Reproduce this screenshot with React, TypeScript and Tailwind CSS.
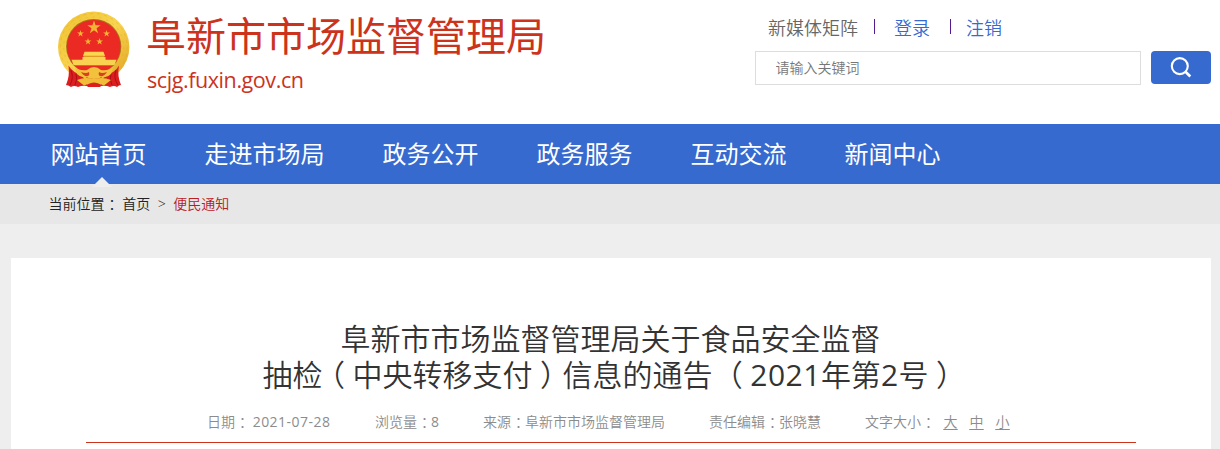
import React from 'react';

const navItems = ['网站首页', '走进市场局', '政务公开', '政务服务', '互动交流', '新闻中心'];

const STAR = 'M0,-1 L.225,-.309 L.951,-.309 L.363,.118 L.588,.809 L0,.382 L-.588,.809 L-.363,.118 L-.951,-.309 L-.225,-.309 Z';

const stars = [
  { x: 44, y: 22.5, s: 7 },
  { x: 30.5, y: 28.5, s: 3.6 },
  { x: 56.6, y: 28.5, s: 3.6 },
  { x: 38, y: 36.6, s: 3.6 },
  { x: 49.6, y: 36.6, s: 3.6 },
];

const Emblem: React.FC = () => (
  <svg width="90" height="90" viewBox="0 0 90 90" aria-hidden="true">
    <defs>
      <linearGradient id="gold" x1="0" y1="0" x2="1" y2="1">
        <stop offset="0" stopColor="#efc02f" />
        <stop offset="0.5" stopColor="#f8d450" />
        <stop offset="1" stopColor="#dfa21f" />
      </linearGradient>
    </defs>
    <ellipse cx="43.7" cy="42" rx="35.7" ry="35.5" fill="url(#gold)" />
    <circle cx="43.7" cy="42" r="33.5" fill="none" stroke="#e2a526" strokeWidth="1" strokeDasharray="3 4" opacity="0.4" />
    <circle cx="43.7" cy="42" r="30" fill="none" stroke="#e2a526" strokeWidth="1" strokeDasharray="2 5" opacity="0.4" />
    <circle cx="43.7" cy="41.5" r="27.6" fill="#a8741c" />
    <circle cx="43.7" cy="41.8" r="26.8" fill="#ec2a24" />
    {stars.map((star) => (
      <path key={star.x} d={STAR} fill="#f2b632" transform={`translate(${star.x} ${star.y}) scale(${star.s})`} />
    ))}
    {/* Tiananmen gate */}
    <path d="M34.5 46.7H53.5L55 51H33Z" fill="#fbd64e" />
    <path d="M33.5 50.7H54.5V52.2H33.5Z" fill="#e29a24" />
    <path d="M32.5 52H55.5V55H32.5Z" fill="#f8d250" />
    <path d="M21.5 54.7H66.5L64.5 60H23.5Z" fill="#f8d250" />
    <path d="M23.5 60H64.5L63 61H25Z" fill="#c9791b" />
    {/* ribbons */}
    <path d="M18.5 60.5Q23 68 32 70L38 81Q32 80 28 82Q24 80 21 82Q18 80 16 80Q20 71 18.5 60.5Z" fill="#dc1e1f" />
    <path d="M69 60.5Q65 68 55 70L50 81Q56 80 60 82Q64 80 67 82Q69 80 71 80Q67 71 69 60.5Z" fill="#dc1e1f" />
    <path d="M21 65Q24 73 20 80M26 69Q28 74 25 80M66 65Q63 73 68 80M61 69Q59 74 62 80" stroke="#a90f18" strokeWidth="1" fill="none" />
    <path d="M25 63Q31 66 37 65Q44 59 51 65Q57 66 63 63L61 69Q57 73 53 72Q49 76 44 75Q39 76 35 72Q31 73 27 69Z" fill="#f3c23d" />
    <path d="M31 67Q36 69 39 67Q40 70 38 71Q34 72 31 67Z" fill="#d8401e" />
    <path d="M57 67Q52 69 49 67Q48 70 50 71Q54 72 57 67Z" fill="#d8401e" />
    <path d="M36 72Q44 76 52 72L50 75H38Z" fill="#dc2a1e" />
    <path d="M27 75Q35 71.5 44 74Q53 71.5 61 75L54 80.5Q44 76 34 80.5Z" fill="#efbd38" />
    <path d="M36 80Q44 75 52 80L50 82H38Z" fill="#dc1e1f" />
  </svg>
);

const SearchIcon: React.FC = () => (
  <svg width="24" height="24" viewBox="0 0 24 24" fill="none" stroke="#fff" strokeWidth="2.1">
    <circle cx="10.8" cy="10.1" r="8" />
    <path d="M16.5 15.8L21.3 20.5" strokeWidth="2.7" />
  </svg>
);

const Header: React.FC = () => (
  <header className="flex h-[124px] justify-between bg-white pr-[9px] pl-[50px]">
    <div className="flex">
      <div className="h-[90px] w-[90px] pt-[5px]">
        <Emblem />
      </div>
      <div className="pt-[11px] pl-[6px] text-[#cb331d]">
        <h1 className="text-[40px] leading-[49px] whitespace-nowrap">阜新市市场监督管理局</h1>
        <p className="pl-px text-[21.5px] leading-[39px] tracking-[-0.42px]">scjg.fuxin.gov.cn</p>
      </div>
    </div>

    <div className="w-[456px] pt-[14px]">
      <div className="flex h-[28px] items-center pl-[13px] text-[18px] font-[350] whitespace-nowrap text-[#366acf]">
        <span className="w-[106px] text-[#666]">新媒体矩阵</span>
        <span className="mb-[3px] h-[15px] w-px bg-[#551a8b]" />
        <a className="ml-[19px] w-[56px]">登录</a>
        <span className="mb-[3px] h-[15px] w-px bg-[#551a8b]" />
        <a className="ml-[15px]">注销</a>
      </div>
      <div className="mt-[9px] flex justify-between">
        <input
          className="h-[34px] w-[386px] border border-[#ddd] pb-[2px] pl-[19.5px] text-[14px] font-[350] outline-none placeholder:text-[#777]"
          placeholder="请输入关键词"
        />
        <button className="flex h-[33px] w-[60px] items-center justify-center rounded-[4px] bg-[#366acf]">
          <SearchIcon />
        </button>
      </div>
    </div>
  </header>
);

const Nav: React.FC = () => (
  <nav className="flex h-[60px] gap-[58px] bg-[#366acf] pl-[50.5px] text-[24px] leading-[60px] text-white">
    {navItems.map((item, i) => (
      <a key={item} className="relative h-[60px] whitespace-nowrap">
        {item}
        {i === 0 && (
          <svg className="absolute bottom-[-3px] left-[41px]" width="20" height="10" viewBox="0 0 20 10">
            <path d="M10 0L20 10H0Z" fill="#eee" />
          </svg>
        )}
      </a>
    ))}
  </nav>
);

// full-width punctuation, centred in its cell
const Colon: React.FC = () => (
  <span className="inline-block w-[14px] pl-px text-center [font-feature-settings:'halt']">：</span>
);

const Paren: React.FC<{ children: string }> = ({ children }) => (
  <span className="inline-block w-[30px] text-center [font-feature-settings:'halt']">{children}</span>
);

const Article: React.FC = () => (
  <main className="mr-[9px] ml-[11px] h-[191px] bg-white px-[75px] pt-[63px] text-[#333]">
    <h2 className="pr-px text-center text-[30px] leading-[36px] font-[350] whitespace-pre">
      阜新市市场监督管理局关于食品安全监督
      <br />
      抽检<Paren>（</Paren>中央转移支付<Paren>）</Paren>信息的通告 <Paren>（</Paren>
      <span className="font-normal tracking-[0.5px]">2021</span>年第<span className="font-normal tracking-[0.5px]">2</span>号<Paren>）</Paren>
    </h2>
    <div className="flex h-[50px] border-b border-[#cb331d] pt-[18px] pl-[121px] text-[14px] leading-[22px] font-[350] whitespace-pre text-[#8c8c8c]">
      <span className="w-[168px]">日期<Colon /> <span className="font-normal tracking-[0.48px]">2021-07-28</span></span>
      <span className="w-[108px]">浏览量<Colon /><span className="font-normal">8</span></span>
      <span className="w-[226px]">来源<Colon />阜新市市场监督管理局</span>
      <span className="w-[156px]">责任编辑<Colon />张晓慧</span>
      <span className="w-[78.5px]">文字大小<Colon /></span>
      <span className="flex gap-[12px] underline underline-offset-2">
        <a>大</a>
        <a>中</a>
        <a>小</a>
      </span>
    </div>
  </main>
);

export default function App() {
  return (
    <div
      lang="zh-CN"
      className="h-[449px] w-[1220px] overflow-hidden bg-[#eee] font-['Open_Sans','Noto_Sans_CJK_SC',sans-serif]"
    >
      <Header />
      <Nav />
      <div className="mb-[34px] h-[40px] bg-[#e7e7e7] pl-[48.5px] text-[14px] leading-[40px] font-[350] whitespace-pre text-[#222]">
        当前位置<Colon /> <a>首页</a>
        <span className="mx-[7.5px] text-[14px]">&gt;</span>
        <a className="text-[#b8201f]">便民通知</a>
      </div>
      <Article />
    </div>
  );
}
